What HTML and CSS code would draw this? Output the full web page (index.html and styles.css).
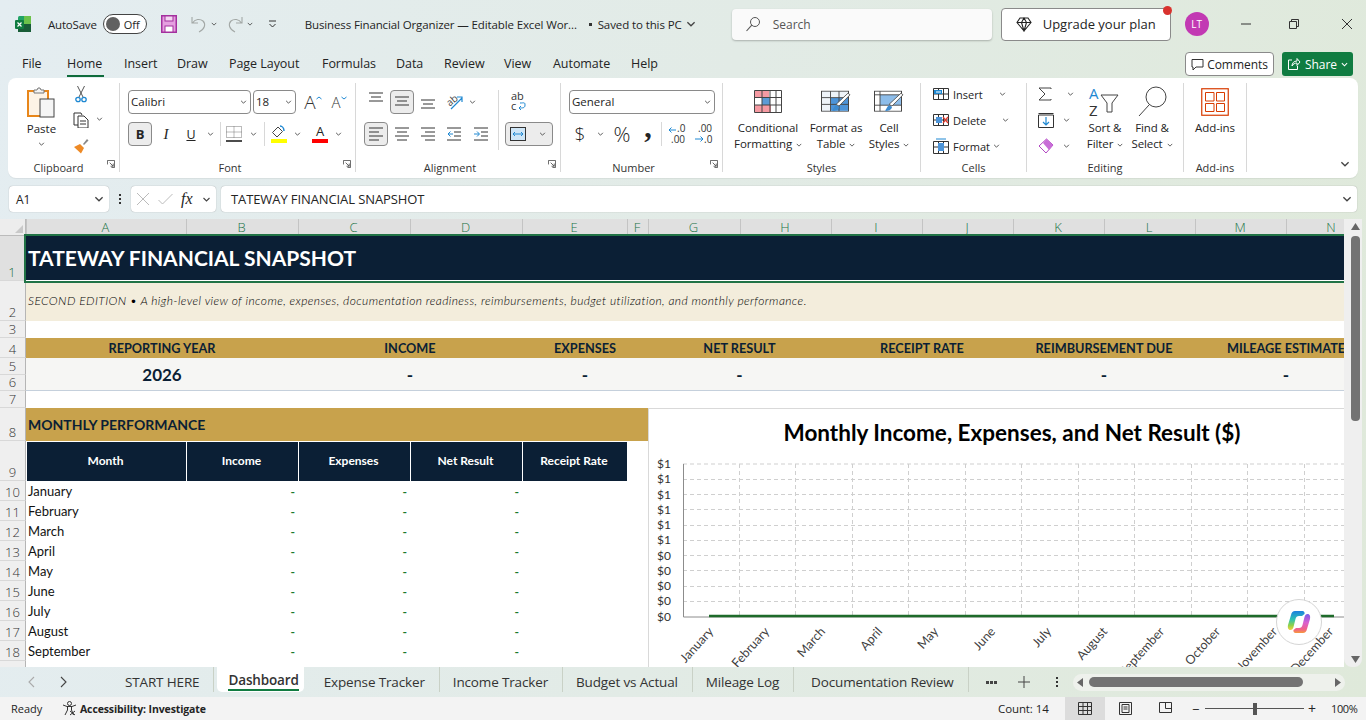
FILE: index.html
```html
<!DOCTYPE html>
<html lang="en">
<head>
    <meta charset="UTF-8">
    <title>Business Financial Organizer</title>
    <link rel="stylesheet" href="styles.css">
</head>
<body>
    <svg class="defs">
        <symbol id="chev" viewBox="0 0 8 5"><path d="M1 1l3 3 3-3" fill="none" stroke="#444" stroke-width="1.1"/></symbol>
        <symbol id="launch" viewBox="0 0 9 9"><path d="M.5 5V.5h8v8H5M3 3l4 4M7 4v3H4" fill="none" stroke="#555"/></symbol>
        <symbol id="lines" viewBox="0 0 14 12"><path d="M0 1h14M2 5h10M0 9h14" fill="none" stroke="#333"/></symbol>
    </svg>

    <!-- title bar -->
    <div class="titlebar">
        <svg class="logo" width="18" height="18" viewBox="0 0 18 18">
            <rect x="4" y="1" width="13" height="16" rx="1.5" fill="#21a366"/>
            <rect x="10" y="1" width="7" height="8" fill="#6cc24a"/>
            <rect x="4" y="9" width="13" height="8" fill="#185c37"/>
            <rect x="1" y="5" width="9" height="9" rx="1" fill="#107c41"/>
            <path d="M3.5 7.5l4 4M7.5 7.5l-4 4" stroke="#fff" stroke-width="1.2"/>
        </svg>
        <span class="autosave">AutoSave</span>
        <div class="toggle"><i></i><span>Off</span></div>
        <svg class="save" width="16" height="18" viewBox="0 0 16 18">
            <rect x=".75" y=".75" width="14.5" height="16.5" fill="#e59fe0" stroke="#a4309e" stroke-width="1.5"/>
            <rect x="4" y="1" width="8" height="5" fill="#f4d6f2" stroke="#a4309e"/>
            <rect x="4" y="11" width="8" height="6" fill="#fff" stroke="#a4309e"/>
        </svg>
        <svg class="undo" width="16" height="17" viewBox="0 0 16 17"><path d="M1 1v6h6M1.5 7C4 3 9 2.500 12 5c3 3 2 8-4 11" fill="none" stroke="#a3a8a6" stroke-width="1.1"/></svg>
        <svg class="qchev" width="6" height="4"><use href="#chev"/></svg>
        <svg class="redo" width="16" height="17" viewBox="0 0 16 17"><path d="M15 1v6H9M14.500 7C12 3 7 2.500 4 5c-3 3-2 8 4 11" fill="none" stroke="#a3a8a6" stroke-width="1.1"/></svg>
        <svg class="qchev" width="6" height="4"><use href="#chev"/></svg>
        <svg class="qat" width="9" height="8" viewBox="0 0 9 8"><path d="M1 1h7M1.500 4l3 3 3-3" fill="none" stroke="#333"/></svg>
        <span class="doc-title">Business Financial Organizer — Editable Excel Wor...</span>
        <span class="doc-dot"></span>
        <span class="doc-saved">Saved to this PC</span>
        <svg class="doc-chev" width="10" height="6"><use href="#chev"/></svg>
        <div class="searchbox">
            <svg width="16" height="16" viewBox="0 0 16 16"><circle cx="10" cy="6" r="4.500" fill="none" stroke="#555"/><path d="M6.800 9.200L1.500 15" stroke="#555" stroke-width="1.100"/></svg>
            <span>Search</span>
        </div>
        <div class="upgrade">
            <svg width="16" height="15" viewBox="0 0 16 15"><path d="M4 1h8l3 4.500L8 14 1 5.500zM1 5.500h14M5.500 5.500L8 14l2.500-8.500L8 1z" fill="none" stroke="#222" stroke-width="1.100"/></svg>
            <span>Upgrade your plan</span>
            <i class="reddot"></i>
        </div>
        <div class="avatar">LT</div>
        <div class="winbtns">
            <svg width="10" height="10" viewBox="0 0 10 10"><path d="M0 5h10" stroke="#333"/></svg>
            <svg width="10" height="10" viewBox="0 0 10 10"><path d="M2.500 2V.5h7v7H8M.5 2.500h7v7h-7z" fill="none" stroke="#333"/></svg>
            <svg class="winclose" width="10" height="10" viewBox="0 0 10 10"><path d="M0 0l10 10M10 0L0 10" stroke="#333"/></svg>
        </div>
    </div>

    <!-- ribbon tabs -->
    <div class="menubar">
        <span class="menu m-file">File</span>
        <span class="menu m-home">Home</span>
        <span class="menu m-insert">Insert</span>
        <span class="menu m-draw">Draw</span>
        <span class="menu m-page">Page Layout</span>
        <span class="menu m-form">Formulas</span>
        <span class="menu m-data">Data</span>
        <span class="menu m-review">Review</span>
        <span class="menu m-view">View</span>
        <span class="menu m-auto">Automate</span>
        <span class="menu m-help">Help</span>
        <div class="comments">
            <svg width="13" height="13" viewBox="0 0 13 13"><path d="M1 1.500h11v7.500H5l-3 3V9H1z" fill="none" stroke="#333"/></svg>
            Comments
        </div>
        <div class="share">
            <svg width="14" height="14" viewBox="0 0 14 14"><path d="M5 3H1.500v9.500h9V9M5 9c0-3 2-5 5-5V1.500L13 5l-3 3.500V6C8 6 6 7 5 9z" fill="none" stroke="#fff"/></svg>
            Share
            <svg width="7" height="5" viewBox="0 0 8 5"><path d="M1 1l3 3 3-3" fill="none" stroke="#fff" stroke-width="1.200"/></svg>
        </div>
    </div>

    <!-- ribbon -->
    <div class="ribbon">
        <div class="group g-clip">
            <div class="clip-body">
                <div class="paste">
                    <svg width="30" height="32" viewBox="0 0 30 32">
                        <rect x="1" y="4" width="20" height="25" fill="#fdf3e6" stroke="#e8861a" stroke-width="2"/>
                        <path d="M7 5V3h3l1-2h2l1 2h3v3H7z" fill="#f4f4f4" stroke="#777"/>
                        <rect x="13" y="12" width="14" height="18" fill="#f5f5f5" stroke="#444"/>
                    </svg>
                    <span>Paste</span>
                    <svg class="chev" width="7" height="4"><use href="#chev"/></svg>
                </div>
                <div class="clip-tools">
                    <div class="cliprow">
                        <svg width="12" height="18" viewBox="0 0 12 18"><path d="M2.500 1L8 12M9.500 1L4 12" stroke="#555"/><circle cx="3" cy="14.500" r="2.200" fill="none" stroke="#1e88d2" stroke-width="1.300"/><circle cx="9" cy="14.500" r="2.200" fill="none" stroke="#1e88d2" stroke-width="1.300"/></svg>
                    </div>
                    <div class="cliprow">
                        <svg width="16" height="16" viewBox="0 0 16 16"><path d="M5 13H1V1h7l1 2M5 4h6l4 4v8H5z" fill="none" stroke="#333"/><path d="M7 9h6M7 12h6" stroke="#333"/></svg>
                        <svg class="copychev" width="7" height="4"><use href="#chev"/></svg>
                    </div>
                    <div class="cliprow">
                        <svg width="16" height="16" viewBox="0 0 16 16"><path d="M10 6l4-5 1.500 1.500L11 7z" fill="#888"/><path d="M1 9l6-3 4 4-3 5.500z" fill="#ee8a26"/></svg>
                    </div>
                </div>
            </div>
            <div class="glabel">Clipboard</div>
            <svg class="launcher" width="8" height="8"><use href="#launch"/></svg>
        </div>

        <div class="group g-font">
            <div class="rrow">
                <div class="select w123"><span>Calibri</span><svg width="7" height="4"><use href="#chev"/></svg></div>
                <div class="select w43 ml2"><span>18</span><svg width="7" height="4"><use href="#chev"/></svg></div>
                <div class="ib w24 ml5 bigA">A<svg width="6" height="4" viewBox="0 0 6 4"><path d="M.5 3L3 1l2.500 2" fill="none" stroke="#1e88d2"/></svg></div>
                <div class="ib w24 ml2 smallA">A<svg width="6" height="4" viewBox="0 0 6 4"><path d="M.5 1L3 3l2.500-2" fill="none" stroke="#1e88d2"/></svg></div>
            </div>
            <div class="rrow">
                <div class="ib w24 on bold">B</div>
                <div class="ib w24 ml2 italic">I</div>
                <div class="ib w26 under">U</div>
                <div class="ib w12"><svg width="7" height="4"><use href="#chev"/></svg></div>
                <i class="vsep ml4 mr3"></i>
                <div class="ib w20"><svg width="16" height="16" viewBox="0 0 16 16"><path d="M.5.5h15v11H.5zM8 .5v11M.5 6h15" fill="none" stroke="#777" stroke-dasharray="1 1"/><path d="M0 15h16" stroke="#111" stroke-width="1.500"/></svg></div>
                <div class="ib w18"><svg width="7" height="4"><use href="#chev"/></svg></div>
                <i class="vsep ml2 mr2"></i>
                <div class="ib w24"><svg width="16" height="18" viewBox="0 0 16 18"><path d="M7 2L1.500 7.500 6 12l5.500-5.500z" fill="#fff" stroke="#444"/><path d="M9 1c2 0 4 2 4 5" fill="none" stroke="#1e88d2" stroke-width="1.500"/><rect y="14" width="16" height="4" fill="#ffff00"/></svg></div>
                <div class="ib w12"><svg width="7" height="4"><use href="#chev"/></svg></div>
                <div class="ib w24 ml5 fontcolor">A<i></i></div>
                <div class="ib w12"><svg width="7" height="4"><use href="#chev"/></svg></div>
            </div>
            <div class="glabel">Font</div>
            <svg class="launcher" width="8" height="8"><use href="#launch"/></svg>
        </div>

        <div class="group g-align">
            <div class="align-main">
                <div class="rrow">
                    <div class="ib w24 top"><svg width="14" height="12"><use href="#lines"/></svg></div>
                    <div class="ib w24 ml2 on"><svg width="14" height="12"><use href="#lines"/></svg></div>
                    <div class="ib w28 bot"><svg width="14" height="12"><use href="#lines"/></svg></div>
                    <div class="ib w24"><svg width="20" height="20" viewBox="0 0 20 20"><text x="3" y="13" class="ortext" transform="rotate(-40 7 10)">ab</text><path d="M7 17L18 6M13 5h5v5" fill="none" stroke="#1e88d2" stroke-width="1.200"/></svg></div>
                    <div class="ib w12"><svg width="7" height="4"><use href="#chev"/></svg></div>
                </div>
                <div class="rrow">
                    <div class="ib w24 on"><svg width="14" height="14" viewBox="0 0 14 14"><path d="M0 1h14M0 5h10M0 9h14M0 13h10" stroke="#333"/></svg></div>
                    <div class="ib w28"><svg width="14" height="14" viewBox="0 0 14 14"><path d="M0 1h14M2 5h10M0 9h14M2 13h10" stroke="#333"/></svg></div>
                    <div class="ib w24"><svg width="14" height="14" viewBox="0 0 14 14"><path d="M0 1h14M4 5h10M0 9h14M4 13h10" stroke="#333"/></svg></div>
                    <div class="ib w28"><svg width="14" height="14" viewBox="0 0 14 14"><path d="M0 1h14M7 5h7M7 9h7M0 13h14" stroke="#333"/><path d="M6 7H1M3.500 4.500L1 7l2.500 2.500" fill="none" stroke="#1e88d2"/></svg></div>
                    <div class="ib w26"><svg width="14" height="14" viewBox="0 0 14 14"><path d="M0 1h14M7 5h7M7 9h7M0 13h14" stroke="#333"/><path d="M0 7h5M3 4.500L5.500 7 3 9.500" fill="none" stroke="#1e88d2"/></svg></div>
                </div>
            </div>
            <div class="align-wrap">
                <div class="ib w48 wrapbtn"><svg width="20" height="24" viewBox="0 0 20 24"><text x="3" y="10" class="wraptext">ab</text><text x="3" y="20" class="wraptext">c</text><path d="M12 13c4 0 5-1 5 2s-2 3-6 3M13 16l-2 2 2 2" fill="none" stroke="#1e88d2"/></svg></div>
                <div class="ib w48 on merge">
                    <svg width="16" height="14" viewBox="0 0 16 14"><rect x=".5" y=".5" width="15" height="13" fill="#cfe6f7" stroke="#333"/><path d="M3 7h10M5 5L3 7l2 2M11 5l2 2-2 2" fill="none" stroke="#1e88d2"/></svg>
                    <svg width="7" height="4"><use href="#chev"/></svg>
                </div>
            </div>
            <div class="glabel">Alignment</div>
            <svg class="launcher" width="8" height="8"><use href="#launch"/></svg>
        </div>

        <div class="group g-num">
            <div class="rrow">
                <div class="select w146"><span>General</span><svg width="7" height="4"><use href="#chev"/></svg></div>
            </div>
            <div class="rrow">
                <div class="ib w22 big15">$</div>
                <div class="ib w18"><svg width="7" height="4"><use href="#chev"/></svg></div>
                <div class="ib w26 big18">%</div>
                <div class="ib w26 comma">,</div>
                <i class="vsep"></i>
                <div class="ib w26 ml2"><svg width="22" height="24" viewBox="0 0 22 24"><text x="11" y="10" class="dectext">.0</text><text x="5" y="21" class="dectext">.00</text><path d="M10 8H3M5.500 5.500L3 8l2.500 2.500" fill="none" stroke="#1e88d2"/></svg></div>
                <div class="ib w26"><svg width="22" height="24" viewBox="0 0 22 24"><text x="6" y="10" class="dectext">.00</text><text x="12" y="21" class="dectext">.0</text><path d="M3 17h8M8.500 14.500L11 17l-2.500 2.500" fill="none" stroke="#1e88d2"/></svg></div>
            </div>
            <div class="glabel">Number</div>
            <svg class="launcher" width="8" height="8"><use href="#launch"/></svg>
        </div>

        <div class="group g-styles">
            <div class="bigs">
                <div class="bigbtn w70">
                    <div class="bigicon"><svg width="28" height="23" viewBox="0 0 28 23">
                        <path d="M.5.500h27v22H.5z" fill="#fff" stroke="#444"/>
                        <rect x="1" y="1" width="14" height="6" fill="#f59aa2"/><rect x="8" y="8" width="8" height="7" fill="#5b9bd5"/><rect x="1" y="15" width="16" height="7" fill="#f59aa2"/>
                        <path d="M.5 7.500h27M.5 15h27M8 .5v22M16 .5v22M22 .5v22" stroke="#444" fill="none"/>
                    </svg></div>
                    <span>Conditional</span>
                    <span>Formatting <svg width="6" height="4"><use href="#chev"/></svg></span>
                </div>
                <div class="bigbtn w66">
                    <div class="bigicon"><svg width="30" height="24" viewBox="0 0 30 30" preserveAspectRatio="none">
                        <rect x=".5" y="1.500" width="27" height="25" fill="#eef3f8" stroke="#444"/>
                        <rect x="10" y="10" width="17" height="16" fill="#4d94d8"/>
                        <path d="M.5 9.500h27M.5 18h27M9.500 1.500v25M18 1.500v25" stroke="#444" fill="none"/>
                        <path d="M29 6L18 20l-3-2L27 4z" fill="#fff" stroke="#555"/><path d="M15 19c-2 1-2 4-4 7 4 1 7-2 7-5z" fill="#3d8bd0"/>
                    </svg></div>
                    <span>Format as</span>
                    <span>Table <svg width="6" height="4"><use href="#chev"/></svg></span>
                </div>
                <div class="bigbtn w40">
                    <div class="bigicon"><svg width="30" height="24" viewBox="0 0 30 30" preserveAspectRatio="none">
                        <rect x=".5" y="1.500" width="27" height="25" fill="#fff" stroke="#444"/>
                        <rect x="6" y="6" width="21" height="13" fill="#8dbdea"/>
                        <path d="M.5 6h27M6 1.500v25M.5 19h27" stroke="#444" fill="none"/>
                        <path d="M29 6L18 20l-3-2L27 4z" fill="#fff" stroke="#555"/><path d="M15 19c-2 1-2 4-4 7 4 1 7-2 7-5z" fill="#3d8bd0"/>
                    </svg></div>
                    <span>Cell</span>
                    <span>Styles <svg width="6" height="4"><use href="#chev"/></svg></span>
                </div>
            </div>
            <div class="glabel">Styles</div>
        </div>

        <div class="group g-cells">
            <div class="cellrows">
                <div class="cellrow">
                    <svg width="16" height="14" viewBox="0 0 16 14"><path d="M.5 1.500h15v11H.5zM5.500 1.500v11M10.500 1.500v11M.5 7h15" fill="#fff" stroke="#333"/><path d="M9 5H1" stroke="#1e88d2" stroke-width="4"/><path d="M8 5H3" stroke="#fff"/></svg>
                    <span>Insert</span>
                    <svg class="c1" width="7" height="4"><use href="#chev"/></svg>
                </div>
                <div class="cellrow">
                    <svg width="16" height="14" viewBox="0 0 16 14"><path d="M.5 1.500h15v11H.5zM5.500 1.500v11M10.500 1.500v11M.5 7h15" fill="#fff" stroke="#333"/><rect x="3" y="4" width="6" height="6" fill="#4d94d8"/><path d="M10 4l5 6M15 4l-5 6" stroke="#e03c31" stroke-width="1.200"/></svg>
                    <span>Delete</span>
                    <svg class="c1" width="7" height="4"><use href="#chev"/></svg>
                </div>
                <div class="cellrow">
                    <svg width="16" height="16" viewBox="0 0 16 16"><path d="M.5 3.500h15v12H.5zM5.500 3.500v12M10.500 3.500v12M.5 9h15" fill="#fff" stroke="#333"/><rect x="5" y="5" width="6" height="8" fill="#4d94d8"/><path d="M3 1h10" stroke="#1e88d2"/></svg>
                    <span>Format</span>
                    <svg class="c2" width="7" height="4"><use href="#chev"/></svg>
                </div>
            </div>
            <div class="glabel">Cells</div>
        </div>

        <div class="group g-edit">
            <div class="edit-body">
                <div class="edit-tools">
                    <div class="cellrow">
                        <svg width="14" height="14" viewBox="0 0 14 14"><path d="M13 2V1H1l6 6-6 6h12v-1" fill="none" stroke="#444"/></svg>
                        <svg class="e1" width="7" height="4"><use href="#chev"/></svg>
                    </div>
                    <div class="cellrow">
                        <svg width="16" height="16" viewBox="0 0 16 16"><path d="M.5 3h15v12.500H.5z" fill="#fff" stroke="#333"/><path d="M.5 1.500h15" stroke="#333"/><path d="M8 5v8M5 10l3 3 3-3" fill="none" stroke="#1e88d2" stroke-width="1.200"/></svg>
                        <svg class="e2" width="7" height="4"><use href="#chev"/></svg>
                    </div>
                    <div class="cellrow">
                        <svg width="16" height="16" viewBox="0 0 16 16"><path d="M8.500 1L15 7l-7 8-7-7z" fill="#fff" stroke="#b146c2"/><path d="M8.500 1L15 7l-4 5-6-7z" fill="#c86dd7"/></svg>
                        <svg class="e2" width="7" height="4"><use href="#chev"/></svg>
                    </div>
                </div>
                <div class="bigbtn w48">
                    <div class="bigicon"><svg width="34" height="32" viewBox="0 0 34 32"><text x="1" y="13" class="sorta">A</text><text x="1" y="30" class="sortz">Z</text><path d="M13 9h17l-6 8v9h-5v-9z" fill="#fff" stroke="#444"/></svg></div>
                    <span>Sort &amp;</span>
                    <span>Filter <svg width="6" height="4"><use href="#chev"/></svg></span>
                </div>
                <div class="bigbtn w46">
                    <div class="bigicon"><svg width="32" height="32" viewBox="0 0 32 32"><circle cx="20" cy="11" r="10" fill="#fff" stroke="#444"/><path d="M13 19L3 30" stroke="#444"/></svg></div>
                    <span>Find &amp;</span>
                    <span>Select <svg width="6" height="4"><use href="#chev"/></svg></span>
                </div>
            </div>
            <div class="glabel">Editing</div>
        </div>

        <div class="group g-add">
            <div class="bigs">
                <div class="bigbtn wfull">
                    <div class="bigicon"><svg width="28" height="28" viewBox="0 0 28 28"><rect x=".75" y=".75" width="26.500" height="26.500" fill="#fff" stroke="#d83b01" stroke-width="1.200"/><path d="M4.500 4.500h8.500v8.500H4.500zM15.500 4.500h8v8.500h-8zM4.500 15.500h8.500v8H4.500zM15.500 15.500h8v8h-8z" fill="none" stroke="#d83b01"/></svg></div>
                    <span>Add-ins</span>
                </div>
            </div>
            <div class="glabel">Add-ins</div>
        </div>

        <svg class="collapse" width="10" height="6"><use href="#chev"/></svg>
    </div>

    <!-- formula bar -->
    <div class="formulabar">
        <div class="namebox"><span>A1</span><svg width="10" height="6"><use href="#chev"/></svg></div>
        <div class="fdots"><i></i><i></i><i></i></div>
        <div class="fxbox">
            <svg width="12" height="12" viewBox="0 0 12 12"><path d="M0 0l12 12M12 0L0 12" stroke="#bbb"/></svg>
            <svg width="15" height="11" viewBox="0 0 15 11"><path d="M.5 6l4 4 10-10" fill="none" stroke="#bbb"/></svg>
            <span class="fx">fx</span>
            <svg width="9" height="5"><use href="#chev"/></svg>
        </div>
        <div class="finput"><span>TATEWAY FINANCIAL SNAPSHOT</span><svg width="10" height="6"><use href="#chev"/></svg></div>
    </div>

    <!-- sheet -->
    <div class="sheetwrap">
        <div class="sheet">
            <div class="corner"><svg width="8" height="8" viewBox="0 0 8 8"><path d="M8 0v8H0z" fill="#c9c9c9"/></svg></div>
            <div class="col">A</div><div class="col">B</div><div class="col">C</div><div class="col">D</div><div class="col">E</div><div class="col">F</div><div class="col">G</div><div class="col">H</div><div class="col">I</div><div class="col">J</div><div class="col">K</div><div class="col">L</div><div class="col">M</div><div class="col">N</div>

            <div class="rh sel">1</div>
            <div class="all title">TATEWAY FINANCIAL SNAPSHOT</div>

            <div class="rh">2</div>
            <div class="all subtitle">SECOND EDITION • A high-level view of income, expenses, documentation readiness, reimbursements, budget utilization, and monthly performance.</div>

            <div class="rh">3</div>
            <div class="all"></div>

            <div class="rh">4</div>
            <div class="kh s2">REPORTING YEAR</div>
            <div class="kh s2">INCOME</div>
            <div class="kh s2">EXPENSES</div>
            <div class="kh s2">NET RESULT</div>
            <div class="kh s2">RECEIPT RATE</div>
            <div class="kh s2">REIMBURSEMENT DUE</div>
            <div class="kh s2">MILEAGE ESTIMATE</div>

            <div class="rh">5</div>
            <div class="kv s2 year">2026</div>
            <div class="kv s2">-</div>
            <div class="kv s2">-</div>
            <div class="kv s2">-</div>
            <div class="kv s2"></div>
            <div class="kv s2">-</div>
            <div class="kv s2">-</div>
            <div class="rh">6</div>

            <div class="rh">7</div>
            <div class="all"></div>

            <div class="rh">8</div>
            <div class="section">MONTHLY PERFORMANCE</div>
            <div class="chart">
                <svg width="696" height="259" viewBox="0 0 696 259">
                    <text x="364" y="33" text-anchor="middle" class="ctitle">Monthly Income, Expenses, and Net Result ($)</text>
                    <g class="gridl">
                        <path d="M35 56H696M35 71.500H696M35 86.500H696M35 101.500H696M35 117.500H696M35 132.500H696M35 147.500H696M35 162.500H696M35 178.500H696M35 193.500H696"/>
                        <path d="M91.500 56V209M147.500 56V209M204.500 56V209M260.500 56V209M317.500 56V209M373.500 56V209M430.500 56V209M486.500 56V209M543.500 56V209M599.500 56V209M656.500 56V209"/>
                    </g>
                    <path d="M35.500 56V209H696" fill="none" stroke="#8c8c8c"/>
                    <path d="M61 208H686" stroke="#1e6b2a" stroke-width="2.500"/>
                    <g class="ylab">
                        <text x="9" y="60">$1</text><text x="9" y="75">$1</text><text x="9" y="91">$1</text><text x="9" y="106">$1</text><text x="9" y="121">$1</text><text x="9" y="136">$1</text><text x="9" y="152">$0</text><text x="9" y="167">$0</text><text x="9" y="182">$0</text><text x="9" y="197">$0</text><text x="9" y="213">$0</text>
                    </g>
                    <g class="xlab">
                        <text transform="translate(66 224) rotate(-48)">January</text>
                        <text transform="translate(122 224) rotate(-48)">February</text>
                        <text transform="translate(178 224) rotate(-48)">March</text>
                        <text transform="translate(235 224) rotate(-48)">April</text>
                        <text transform="translate(291 224) rotate(-48)">May</text>
                        <text transform="translate(348 224) rotate(-48)">June</text>
                        <text transform="translate(404 224) rotate(-48)">July</text>
                        <text transform="translate(460 224) rotate(-48)">August</text>
                        <text transform="translate(517 224) rotate(-48)">September</text>
                        <text transform="translate(573 224) rotate(-48)">October</text>
                        <text transform="translate(630 224) rotate(-48)">November</text>
                        <text transform="translate(686 224) rotate(-48)">December</text>
                    </g>
                </svg>
                <div class="copilot">
                    <svg width="24" height="24" viewBox="0 0 24 24">
                        <defs>
                            <linearGradient id="cpa" x1="0" y1="0" x2="0" y2="1"><stop offset="0" stop-color="#1b7fe0"/><stop offset=".45" stop-color="#2fc4b2"/><stop offset=".75" stop-color="#8ed24a"/><stop offset="1" stop-color="#f7d23c"/></linearGradient>
                            <linearGradient id="cpb" x1="0" y1="0" x2="0" y2="1"><stop offset="0" stop-color="#7a5be8"/><stop offset=".45" stop-color="#d95fd0"/><stop offset=".8" stop-color="#f0608a"/><stop offset="1" stop-color="#f79a3c"/></linearGradient>
                        </defs>
                        <path d="M8 1h7.500c1.500 0 2.500 1.500 2 3L15 6h-3c-2 0-3 1-3.500 3L6.500 17c-.5 2-1.500 3-3 3C1 20 .5 17.500 1 15L4 5c.5-2.500 2-4 4-4z" fill="url(#cpa)"/>
                        <path d="M16 23H8.500C7 23 6 21.500 6.500 20l2.500-2h3c2 0 3-1 3.500-3l2-8c.5-2 1.500-3 3-3 2.500 0 3 2.500 2.500 5L20 19c-.5 2.500-2 4-4 4z" fill="url(#cpb)"/>
                    </svg>
                </div>
            </div>

            <div class="rh">9</div>
            <div class="th">Month</div><div class="th">Income</div><div class="th">Expenses</div><div class="th">Net Result</div><div class="th">Receipt Rate</div><div></div>

            <div class="rh">10</div><div class="m">January</div><div class="d">-</div><div class="d">-</div><div class="d">-</div><div></div><div></div>
            <div class="rh">11</div><div class="m">February</div><div class="d">-</div><div class="d">-</div><div class="d">-</div><div></div><div></div>
            <div class="rh">12</div><div class="m">March</div><div class="d">-</div><div class="d">-</div><div class="d">-</div><div></div><div></div>
            <div class="rh">13</div><div class="m">April</div><div class="d">-</div><div class="d">-</div><div class="d">-</div><div></div><div></div>
            <div class="rh">14</div><div class="m">May</div><div class="d">-</div><div class="d">-</div><div class="d">-</div><div></div><div></div>
            <div class="rh">15</div><div class="m">June</div><div class="d">-</div><div class="d">-</div><div class="d">-</div><div></div><div></div>
            <div class="rh">16</div><div class="m">July</div><div class="d">-</div><div class="d">-</div><div class="d">-</div><div></div><div></div>
            <div class="rh">17</div><div class="m">August</div><div class="d">-</div><div class="d">-</div><div class="d">-</div><div></div><div></div>
            <div class="rh">18</div><div class="m">September</div><div class="d">-</div><div class="d">-</div><div class="d">-</div><div></div><div></div>
            <div class="rh">19</div>
        </div>
        <div class="vscroll">
            <svg width="9" height="7" viewBox="0 0 9 7"><path d="M4.500 0L9 7H0z" fill="#666"/></svg>
            <div class="vthumb"></div>
            <svg width="9" height="7" viewBox="0 0 9 7"><path d="M4.500 7L9 0H0z" fill="#666"/></svg>
        </div>
    </div>

    <!-- sheet tabs -->
    <div class="tabbar">
        <svg class="nav1" width="7" height="12" viewBox="0 0 7 12"><path d="M6 1L1 6l5 5" fill="none" stroke="#aaa" stroke-width="1.100"/></svg>
        <svg class="nav2" width="7" height="12" viewBox="0 0 7 12"><path d="M1 1l5 5-5 5" fill="none" stroke="#444" stroke-width="1.100"/></svg>
        <div class="tab first">START HERE</div>
        <div class="tab active"><span>Dashboard</span></div>
        <div class="tab">Expense Tracker</div>
        <div class="tab sep">Income Tracker</div>
        <div class="tab sep">Budget vs Actual</div>
        <div class="tab sep">Mileage Log</div>
        <div class="tab sep last">Documentation Review</div>
        <div class="tabmore"><i></i><i></i><i></i></div>
        <svg class="tabplus" width="12" height="12" viewBox="0 0 12 12"><path d="M6 0v12M0 6h12" stroke="#444"/></svg>
        <div class="tabdots"><i></i><i></i><i></i></div>
        <div class="hscroll">
            <svg width="6" height="9" viewBox="0 0 6 9"><path d="M0 4.500L6 0v9z" fill="#666"/></svg>
            <div class="hthumb"></div>
            <svg width="6" height="9" viewBox="0 0 6 9"><path d="M6 4.500L0 0v9z" fill="#666"/></svg>
        </div>
    </div>

    <!-- status bar -->
    <div class="statusbar">
        <span class="ready">Ready</span>
        <svg class="a11y" width="15" height="15" viewBox="0 0 15 15"><circle cx="7.500" cy="2.500" r="2" fill="none" stroke="#333"/><path d="M1 4l4 1.500h5L14 4M5.500 6v3L3 14M9.500 6v3l2 5" fill="none" stroke="#333"/><path d="M8 10l5 4M13 10l-5 4" stroke="#333"/></svg>
        <span class="a11ytext">Accessibility: Investigate</span>
        <span class="count">Count: 14</span>
        <div class="viewbtn on"><svg width="14" height="13" viewBox="0 0 14 13"><path d="M.5.500h13v12H.5zM.5 4.500h13M.5 8.500h13M5 .5v12M9.500.5v12" fill="none" stroke="#333"/></svg></div>
        <div class="viewbtn"><svg width="13" height="13" viewBox="0 0 13 13"><path d="M.5.500h12v12H.5z" fill="none" stroke="#333"/><path d="M3 2.500h7v8H3zM4.500 5h4M4.500 7h4" fill="none" stroke="#333"/></svg></div>
        <div class="viewbtn"><svg width="13" height="13" viewBox="0 0 13 13"><path d="M.5.500h12v10H.5zM6.500.5v6h6" fill="none" stroke="#333"/></svg></div>
        <span class="zminus">−</span>
        <div class="zoomline"><i></i></div>
        <span class="zplus">+</span>
        <span class="zpct">100%</span>
    </div>
</body>
</html>
```

FILE: styles.css
```css
html, body {
    margin: 0;
    padding: 0;
}

body {
    width: 1366px;
    height: 720px;
    overflow: hidden;
    font-family: "Open Sans", "Noto Sans", sans-serif;
    font-size: 12px;
    color: #242424;
    background: linear-gradient(100deg, #e4edf1 0%, #e2ebe6 50%, #dfe9da 100%);
    display: flex;
    flex-direction: column;
}

.defs { display: none; }
svg { flex: none; display: block; }

/* title bar */
.titlebar {
    height: 48px;
    display: flex;
    align-items: center;
    flex: none;
}
.logo { margin-left: 14px; }
.autosave { margin-left: 16px; font-size: 11.5px; letter-spacing: -.2px; }
.toggle {
    margin-left: 6px;
    width: 42px;
    height: 18px;
    border: 1px solid #444;
    border-radius: 10px;
    background: #fff;
    display: flex;
    align-items: center;
    font-size: 11px;
}
.toggle i { width: 14px; height: 14px; border-radius: 50%; background: #616161; margin: 0 4px 0 2px; }
.save { margin-left: 14px; }
.undo { margin-left: 14px; }
.qchev { margin-left: 4px; }
.redo { margin-left: 10px; }
.qat { margin-left: 15px; }
.doc-title { margin-left: 28px; font-size: 11.5px; width: 279px; white-space: nowrap; letter-spacing: -.12px; }
.doc-dot { width: 3px; height: 3px; background: #333; margin: 0 6px 0 5px; }
.doc-saved { font-size: 11.5px; letter-spacing: -.1px; white-space: nowrap; }
.doc-chev { margin-left: 4px; }
.searchbox {
    margin-left: 36px;
    width: 260px;
    height: 31px;
    background: #fafafa;
    border-radius: 4px;
    box-shadow: 0 1px 2px rgba(0,0,0,.25);
    display: flex;
    align-items: center;
    gap: 12px;
    padding-left: 13px;
    box-sizing: border-box;
    color: #555;
    font-size: 12px;
}
.upgrade {
    margin-left: 9px;
    width: 170px;
    height: 33px;
    box-sizing: border-box;
    background: #fff;
    border: 1px solid #8a8a8a;
    border-radius: 4px;
    display: flex;
    align-items: center;
    gap: 11px;
    padding-left: 14px;
    font-size: 13px;
    position: relative;
}
.reddot {
    position: absolute;
    right: -2px;
    top: -3px;
    width: 9px;
    height: 9px;
    border-radius: 50%;
    background: #d9322e;
}
.avatar {
    margin-left: 14px;
    width: 24px;
    height: 24px;
    border-radius: 50%;
    background: #c239b3;
    color: #fff;
    font-size: 10px;
    display: flex;
    align-items: center;
    justify-content: center;
}
.winbtns { margin-left: 32px; display: flex; gap: 38px; }
.winclose { margin-left: 5px; }

/* menu */
.menubar {
    height: 30px;
    display: flex;
    align-items: flex-start;
    flex: none;
    font-size: 12.5px;
    letter-spacing: -.05px;
}
.menu { line-height: 30px; margin-top: 1px; height: 26px; white-space: nowrap; }
.m-file { margin-left: 22px; width: 45px; }
.m-home { width: 37px; margin-right: 20px; border-bottom: 2px solid #0f6b3b; }
.m-insert { width: 53px; }
.m-draw { width: 52px; }
.m-page { width: 93px; }
.m-form { width: 74px; }
.m-data { width: 48px; }
.m-review { width: 60px; }
.m-view { width: 49px; }
.m-auto { width: 78px; }
.m-help { width: 554px; }
.comments {
    margin-top: 4px;
    width: 89px;
    height: 24px;
    box-sizing: border-box;
    background: #fff;
    border: 1px solid #8a8a8a;
    border-radius: 4px;
    display: flex;
    align-items: center;
    justify-content: center;
    gap: 3px;
    font-size: 12px;
}
.share {
    margin-top: 4px;
    margin-left: 8px;
    width: 71px;
    height: 24px;
    background: #107c41;
    color: #fff;
    border-radius: 3px;
    display: flex;
    align-items: center;
    justify-content: center;
    gap: 4px;
    font-size: 12px;
}

/* ribbon */
.ribbon {
    height: 100px;
    margin: 0 8px;
    flex: none;
    background: #fff;
    border-radius: 8px;
    display: flex;
    align-items: flex-start;
    box-shadow: 0 1px 1px rgba(0,0,0,.06);
}
.group {
    margin-top: 5px;
    height: 89px;
    box-sizing: border-box;
    border-right: 1px solid #d8d8d8;
    position: relative;
    flex: none;
}
.glabel {
    position: absolute;
    left: 0;
    right: 0;
    top: 77px;
    height: 16px;
    line-height: 16px;
    text-align: center;
    font-size: 11px;
    color: #333;
}
.g-clip .glabel { right: 10px; }
.g-font .glabel { right: 15px; }
.g-align .glabel { right: 16px; }
.g-num .glabel { right: 16px; }
.launcher { position: absolute; right: 4px; top: 77px; }
.rrow { display: flex; align-items: center; height: 24px; margin-bottom: 8px; }
.ib {
    height: 24px;
    display: flex;
    align-items: center;
    justify-content: center;
    box-sizing: border-box;
    flex: none;
}
.ib.on {
    background: #ececec;
    border: 1px solid #8a8a8a;
    border-radius: 4px;
}
.w12 { width: 12px; }
.w18 { width: 18px; }
.w20 { width: 20px; }
.w22 { width: 22px; }
.w24 { width: 24px; }
.w26 { width: 26px; }
.w28 { width: 28px; }
.w48 { width: 48px; }
.ml2 { margin-left: 2px; }
.ml4 { margin-left: 4px; }
.ml5 { margin-left: 5px; }
.mr2 { margin-right: 2px; }
.mr3 { margin-right: 3px; }
.vsep { width: 1px; height: 24px; background: #d8d8d8; flex: none; }

.select {
    height: 24px;
    box-sizing: border-box;
    border: 1px solid #8a8a8a;
    border-radius: 4px;
    display: flex;
    align-items: center;
    justify-content: space-between;
    padding: 0 3px 2px 2px;
    font-size: 11.5px;
    flex: none;
}
.select svg { margin-top: 2px; }
.w123 { width: 123px; }
.w43 { width: 43px; }
.w146 { width: 146px; }

/* clipboard */
.g-clip { width: 112px; }
.clip-body { display: flex; padding-left: 18px; }
.paste {
    width: 31px;
    display: flex;
    flex-direction: column;
    align-items: center;
    font-size: 11.5px;
    padding-top: 4px;
}
.paste span { margin-top: 2px; line-height: 16px; }
.paste .chev { margin-top: 5px; }
.clip-tools { margin: -2px 0 0 11px; width: 26px; }
.cliprow { height: 26px; display: flex; align-items: center; justify-content: center; position: relative; }
.copychev { position: absolute; right: -9px; top: 10px; }

/* font */
.g-font { width: 236px; padding: 7px 0 0 8px; }
.bigA, .smallA { font-size: 19px; font-weight: 300; align-items: center; color: #333; }
.smallA { font-size: 15px; }
.bigA svg, .smallA svg { margin-bottom: 8px; }
.bold { font-weight: 700; font-size: 13px; }
.italic { font-family: "Liberation Serif", serif; font-style: italic; font-size: 15px; }
.under { text-decoration: underline; font-size: 12.5px; }
.fontcolor { flex-direction: column; font-size: 13px; line-height: 13px; }
.fontcolor i { width: 16px; height: 4px; background: #f00; margin-top: 1px; }

/* alignment */
.g-align { width: 205px; padding: 7px 0 0 8px; display: flex; }
.align-main { width: 134px; height: 60px; border-right: 1px solid #d8d8d8; }
.align-wrap { margin-left: 6px; }
.align-wrap .ib { margin-bottom: 8px; }
.wrapbtn { justify-content: flex-start; padding-left: 3px; }
.merge { justify-content: flex-start; gap: 13px; padding-left: 4px; }
.top svg { margin-bottom: 8px; }
.bot svg { margin-top: 6px; }
.ortext { font-size: 10px; fill: #444; }
.wraptext { font-size: 11px; fill: #333; }
.dectext { font-size: 10px; fill: #333; }

/* number */
.g-num { width: 162px; padding: 7px 0 0 8px; }
.big15 { font-size: 19px; font-weight: 300; }
.big18 { font-size: 21px; font-weight: 300; }
.comma { font-size: 30px; font-weight: 700; padding-bottom: 14px; font-family: "Liberation Serif", serif; }

/* big buttons */
.g-styles { width: 198px; padding-left: 10px; }
.bigs { display: flex; }
.bigbtn {
    display: flex;
    flex-direction: column;
    align-items: center;
    font-size: 11.5px;
    line-height: 16px;
    white-space: nowrap;
    flex: none;
    letter-spacing: -.1px;
}
.bigbtn span svg { display: inline-block; vertical-align: middle; margin-left: 1px; }
.bigicon { height: 37px; display: flex; align-items: center; }
.w70 { width: 70px; }
.w66 { width: 66px; }
.w46 { width: 46px; }
.w40 { width: 40px; }
.wfull { width: 100%; }

/* cells */
.g-cells { width: 106px; padding-left: 12px; }
.cellrows, .edit-tools { display: flex; flex-direction: column; margin-top: -2px; }
.cellrow { height: 26px; display: flex; align-items: center; font-size: 11px; }
.cellrow span { margin-left: 4px; }
.c1 { margin-left: 16px; }
.c2 { margin-left: 3px; }

/* editing */
.g-edit { width: 157px; padding-left: 11px; }
.edit-body { display: flex; }
.edit-tools { width: 43px; }
.e1 { margin-left: 15px; }
.e2 { margin-left: 9px; }
.sorta { font-size: 15px; fill: #1e88d2; }
.sortz { font-size: 15px; fill: #333; }

.g-add { width: 63px; }
.collapse { margin: 83px 0 0 93px; }

/* formula bar */
.formulabar {
    margin: 8px 9px 0;
    height: 26px;
    display: flex;
    flex: none;
}
.namebox, .fxbox, .finput {
    background: #fff;
    border-radius: 4px;
    box-shadow: 0 0 1px rgba(0,0,0,.4);
    display: flex;
    align-items: center;
}
.namebox { width: 100px; justify-content: space-between; padding: 0 5px 0 7px; box-sizing: border-box; }
.fdots { width: 22px; display: flex; flex-direction: column; align-items: center; justify-content: center; gap: 2px; }
.fdots i, .tabdots i { width: 2px; height: 2px; background: #333; }
.fxbox { width: 85px; gap: 9px; padding-left: 6px; box-sizing: border-box; }
.fx { font-family: "Liberation Serif", serif; font-style: italic; font-size: 16px; margin-left: -1px; }
.finput { margin-left: 5px; flex: 1; justify-content: space-between; padding: 0 5px 0 10px; font-size: 13px; letter-spacing: -.1px; }

/* sheet */
.sheetwrap {
    margin-top: 7px;
    height: 448px;
    display: flex;
    flex: none;
}
.sheet {
    width: 1344px;
    height: 448px;
    overflow: hidden;
    flex: none;
    background: #fff;
    display: grid;
    grid-template-columns: 26px 160px 112px 112px 112px 105px 21px 92px 91px 91px 91px 91px 91px 91px 91px;
    grid-template-rows: 17px 45px 40px 17px 20px 17px 16px 17px 33px 40px repeat(10, 20px);
    font-family: Lato, "Open Sans", sans-serif;
}
.sheet > div { box-sizing: border-box; min-width: 0; white-space: nowrap; }
.corner {
    background: #ededed;
    border-right: 1px solid #bbb;
    border-bottom: 1px solid #bbb;
    display: flex;
    justify-content: flex-end;
    align-items: flex-end;
    padding: 0 2px 2px 0;
}
.col {
    background: #e0e0e0;
    border-left: 1px solid #c4c4c4;
    border-bottom: 2px solid #217346;
    color: #217346;
    font-family: "Open Sans", sans-serif;
    font-size: 13px;
    font-weight: 300;
    text-align: center;
    line-height: 17px;
    padding-right: 2px;
}
.rh {
    grid-column: 1;
    background: #efefef;
    border-right: 1px solid #b5b5b5;
    border-bottom: 1px solid #d8d8d8;
    font-family: "Open Sans", sans-serif;
    font-size: 13px;
    font-weight: 300;
    color: #333;
    display: flex;
    align-items: flex-end;
    justify-content: center;
    line-height: 16px;
}
.rh.sel { background: #e0e0e0; color: #217346; border-right: 2px solid #217346; }
.all { grid-column: span 14; }
.s2 { grid-column: span 2; }
.title {
    background: #0b1f35;
    color: #fff;
    font-weight: 700;
    font-size: 21px;
    line-height: 43px;
    padding-left: 2px;
    border-bottom: 1px solid #fff;
    outline: 2px solid #217346;
    position: relative;
}
.subtitle {
    background: #f3eddc;
    font-style: italic;
    font-weight: 300;
    font-size: 12px;
    line-height: 40px;
    padding-left: 2px;
    color: #000;
    letter-spacing: .4px;
}
.kh {
    background: #c8a24c;
    color: #0b1f35;
    font-weight: 700;
    font-size: 12.7px;
    line-height: 21px;
    text-align: center;
}
.kv {
    grid-row: span 2;
    background: #f6f6f4;
    border-bottom: 1px solid #c5d0dc;
    color: #0b1f35;
    font-weight: 700;
    font-size: 17px;
    line-height: 33px;
    text-align: center;
}
.section {
    grid-column: span 6;
    background: #c8a24c;
    color: #0b1f35;
    font-weight: 700;
    font-size: 14px;
    line-height: 33px;
    padding-left: 2px;
}
.th {
    background: #0b1f35;
    color: #fff;
    font-weight: 700;
    font-size: 12px;
    line-height: 38px;
    text-align: center;
    border-left: 1px solid #fff;
    border-top: 1px solid #fff;
    padding-right: 2px;
}
.m { font-size: 13px; line-height: 21px; padding-left: 2px; color: #111; }
.d { font-size: 12px; font-weight: 700; line-height: 21px; text-align: right; padding-right: 3px; color: #1a7a2e; }
.chart {
    grid-column: span 8;
    grid-row: span 12;
    border-top: 1px solid #d9d9d9;
    border-left: 1px solid #d9d9d9;
    position: relative;
}
.chart > svg { margin: -1px 0 0 -1px; }
.ctitle { font-size: 22.5px; font-weight: 700; fill: #000; }
.gridl path { stroke: #cfcfcf; stroke-dasharray: 4 3; fill: none; }
.ylab text { font-size: 12px; fill: #333; }
.xlab text { font-size: 12.5px; fill: #404040; text-anchor: end; }
.copilot {
    position: absolute;
    left: 627px;
    top: 190px;
    width: 44px;
    height: 44px;
    border-radius: 50%;
    background: #fff;
    border: 1px solid #d5d5d5;
    display: flex;
    align-items: center;
    justify-content: center;
}
.vscroll {
    width: 18px;
    height: 448px;
    background: #efefef;
    border-radius: 0 0 8px 8px;
    display: flex;
    flex-direction: column;
    align-items: center;
    padding: 4px 0 4px 4px;
    box-sizing: border-box;
}
.vthumb { width: 9px; height: 185px; margin-top: 6px; margin-bottom: auto; border-radius: 4px; background: #737373; }

/* tabs */
.tabbar {
    height: 30px;
    flex: none;
    display: flex;
    align-items: center;
    font-size: 13.5px;
    color: #333;
    letter-spacing: -.15px;
    white-space: nowrap;
}
.nav1 { margin-left: 28px; }
.nav2 { margin-left: 25px; }
.tab { padding: 0 14px 0 13px; height: 25px; line-height: 31px; margin-top: -5px; }
.tab.first { margin-left: 45px; margin-right: 3px; padding-right: 14px; border-right: 1px solid #c9d1c6; }
.tab.active {
    background: #fff;
    border-radius: 0 0 5px 5px;
    padding: 0 5px 0 11px;
    margin-right: 7px;
    font-weight: 600;
}
.tab.active span { display: block; height: 22px; line-height: 26px; border-bottom: 2px solid #107c41; }
.tab.sep { border-left: 1px solid #c9d1c6; }
.tab.last { border-right: 1px solid #c9d1c6; padding-left: 17px; }
.tabmore { margin-left: 17px; display: flex; gap: 1px; }
.tabmore i { width: 3px; height: 3px; background: #444; }
.tabplus { margin-left: 21px; }
.tabdots { margin-left: 26px; display: flex; flex-direction: column; gap: 2px; }
.hscroll {
    margin-left: 15px;
    width: 272px;
    height: 17px;
    box-sizing: border-box;
    border-radius: 9px;
    background: #eef1ec;
    display: flex;
    align-items: center;
    padding: 0 4px;
}
.hthumb { margin: 0 auto 0 6px; width: 214px; height: 10px; border-radius: 5px; background: #737373; }

/* status bar */
.statusbar {
    height: 23px;
    flex: none;
    background: #f3f3f3;
    display: flex;
    align-items: center;
    font-size: 11px;
    white-space: nowrap;
}
.ready { margin-left: 11px; width: 51px; }
.a11ytext { margin-left: 3px; font-weight: 700; width: 918px; font-size: 10.5px; letter-spacing: -.12px; }
.count { width: 67px; font-size: 11.5px; letter-spacing: -.1px; }
.viewbtn { width: 40px; height: 23px; display: flex; align-items: center; justify-content: center; }
.viewbtn.on { background: #dcdcdc; }
.zminus { margin-left: 7px; font-size: 13px; width: 13px; }
.zoomline { width: 99px; height: 1px; background: #555; display: flex; justify-content: center; align-items: center; }
.zoomline i { width: 4px; height: 12px; background: #555; }
.zplus { margin-left: 4px; font-size: 14px; width: 23px; }
.zpct { letter-spacing: -.4px; }
```
